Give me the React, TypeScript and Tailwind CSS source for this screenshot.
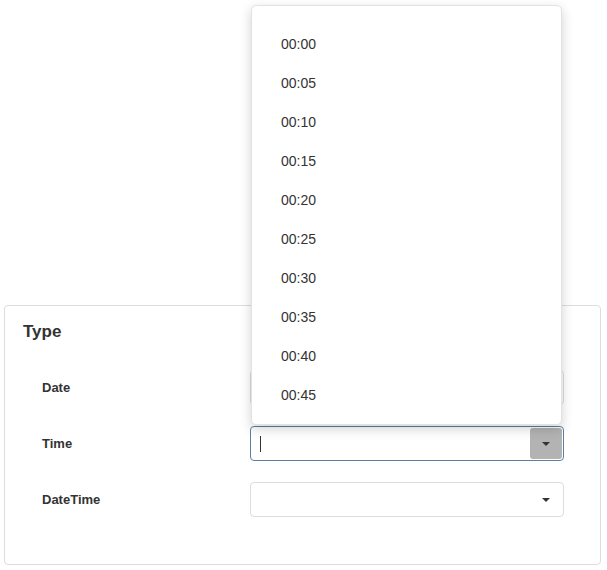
import React from 'react'

const times = ['00:00', '00:05', '00:10', '00:15', '00:20', '00:25', '00:30', '00:35', '00:40', '00:45']

function Caret() {
  return (
    <svg width="8" height="4" viewBox="0 0 8 4" className="fill-[#333]">
      <path d="M0 0h8L4 4z" />
    </svg>
  )
}

export default function App() {
  return (
    <div className="relative w-[607px] h-[570px] bg-white text-[#333]" style={{ fontFamily: '"Liberation Sans", Arial, sans-serif' }}>
      <div className="absolute left-[4px] top-[305px] w-[597px] h-[260px] border border-[#ddd] rounded-[4px] px-[18px] pt-[15px]">
        <h2 className="text-[17px] font-bold leading-[22px] mb-[27px]">Type</h2>
        <div className="flex flex-col gap-[21px]">
          {[
            { label: 'Date', focused: false },
            { label: 'Time', focused: true },
            { label: 'DateTime', focused: false },
          ].map((r) => (
            <div key={r.label} className="flex items-center">
              <div className="w-[227px] pl-[19px] text-[13px] font-bold">{r.label}</div>
              <div
                className={
                  'relative w-[314px] h-[35px] rounded-[4px] border flex items-center justify-end ' +
                  (r.focused ? 'border-[#5b7fa3]' : 'border-[#ddd]')
                }
              >
                {r.focused && <div className="absolute left-[9px] top-[9px] w-px h-[16px] bg-[#333]" />}
                <div
                  className={
                    'w-[32px] h-[31px] mr-[1px] rounded-[3px] flex items-center justify-center ' +
                    (r.focused ? 'bg-[#b3b3b3]' : '')
                  }
                >
                  <Caret />
                </div>
              </div>
            </div>
          ))}
        </div>
      </div>
      <div className="absolute left-[251px] top-[5px] w-[311px] h-[420px] bg-white border border-[#e2e2e2] rounded-[5px] shadow-[0_4px_12px_rgba(0,0,0,0.18)] pt-[19px]">
        {times.map((t) => (
          <div key={t} className="h-[39px] flex items-center pl-[29px] text-[14px]">
            {t}
          </div>
        ))}
      </div>
    </div>
  )
}
